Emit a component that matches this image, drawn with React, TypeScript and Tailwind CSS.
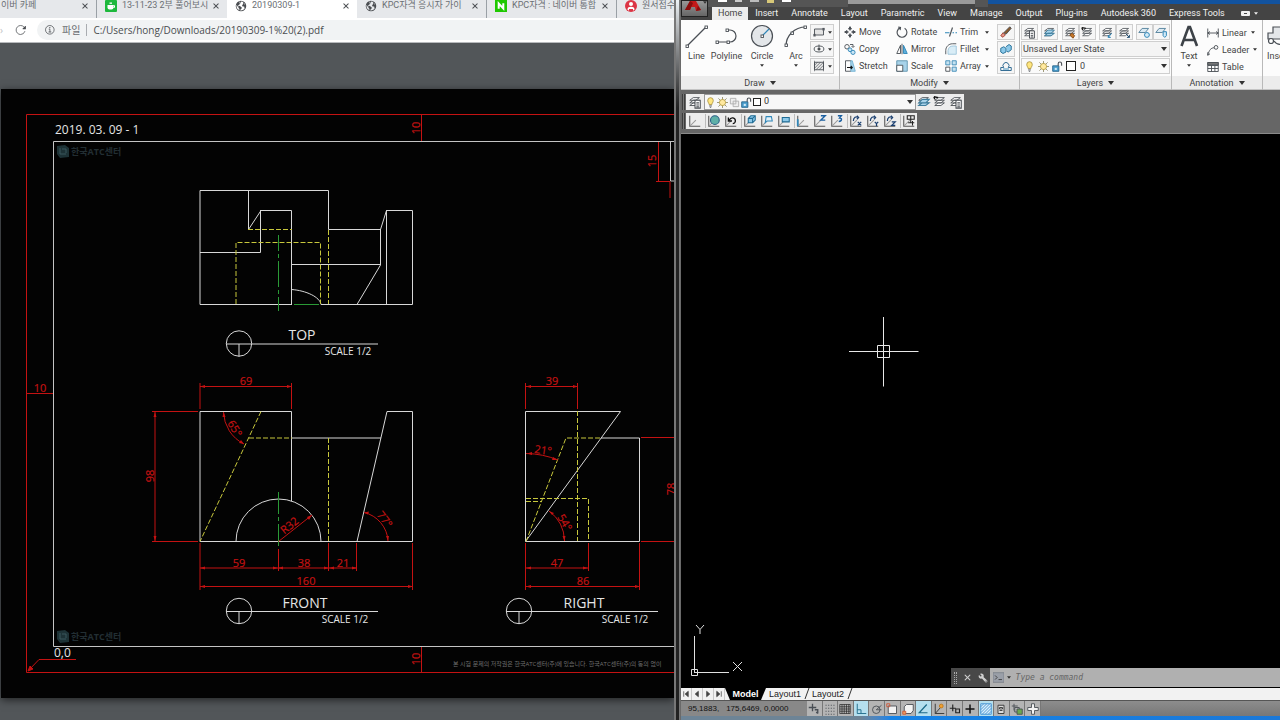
import React from 'react';
import clsx from 'clsx';
import { IoClose, IoReload, IoEarth, IoInformationCircleOutline, IoBuild } from 'react-icons/io5';

const MENU_TABS = [
  'Home',
  'Insert',
  'Annotate',
  'Layout',
  'Parametric',
  'View',
  'Manage',
  'Output',
  'Plug-ins',
  'Autodesk 360',
  'Express Tools'
];

interface GlyphProps {
  children: React.ReactNode;
  className?: string;
  box?: string;
}

const Glyph: React.FC<GlyphProps> = ({ children, className = 'w-3.5 h-3.5', box = '0 0 16 16' }) => (
  <svg
    viewBox={box}
    className={clsx('flex-none', className)}
    fill="none"
    stroke="#4a4f55"
    strokeWidth="1.2"
    aria-hidden="true"
  >
    {children}
  </svg>
);

const Caret: React.FC<{ big?: boolean }> = ({ big }) => (
  <svg viewBox="0 0 6 4" className={clsx('flex-none', big ? 'w-[6px] h-[4px]' : 'w-[4px] h-[3px]')} aria-hidden="true">
    <path d="M0 0h6L3 4z" fill="#333" />
  </svg>
);

/* ---------- browser ---------- */

interface BrowserTabProps {
  title: string;
  icon?: React.ReactNode;
  active?: boolean;
  first?: boolean;
  divider?: boolean;
}

const BrowserTab: React.FC<BrowserTabProps> = ({ title, icon, active, first, divider }) => (
  <div
    className={clsx(
      'flex h-[18px] flex-none items-center pb-[7px] pr-[6px]',
      first ? 'w-[97px] pl-px' : 'w-[130px] pl-2',
      active ? 'bg-white' : 'bg-[#e6e8eb]',
      divider && 'border-r border-[#9aa0a6]'
    )}
  >
    <button className="flex min-w-0 flex-1 items-center gap-[5px] text-[9px] leading-[11px] text-[#6b6f74]">
      {icon}
      <span className="flex-1 whitespace-nowrap text-left">{title}</span>
    </button>
    <button aria-label="Close tab" className="flex-none">
      <IoClose className="h-[10px] w-[10px] text-[#4a4d51]" />
    </button>
  </div>
);

const CafeIcon = () => (
  <svg viewBox="0 0 12 12" className="h-3 w-3 flex-none" aria-hidden="true">
    <rect width="12" height="12" rx="1" fill="#1db83c" />
    <path d="M2.5 5h6v2.6a2 2 0 0 1-2 2h-2a2 2 0 0 1-2-2z" fill="#fff" />
    <path d="M8.3 5.6h1.2v1.8H8.3" fill="none" stroke="#fff" />
    <path d="M4.5 2.5h2.5v1.3H4.5z" fill="#fff" />
  </svg>
);

const NaverIcon = () => (
  <svg viewBox="0 0 12 12" className="h-3 w-3 flex-none" aria-hidden="true">
    <rect width="12" height="12" fill="#1ec800" />
    <path d="M3.7 8.8V3.6l4.6 4.8V3.2" fill="none" stroke="#fff" strokeWidth="2" />
  </svg>
);

const PersonIcon = () => (
  <svg viewBox="0 0 12 12" className="h-3 w-3 flex-none" aria-hidden="true">
    <circle cx="6" cy="6" r="6" fill="#dc3545" />
    <circle cx="6" cy="4" r="2" fill="#fff" />
    <path d="M2.4 9.6C2.6 7.5 4 6.8 6 6.8s3.4.7 3.6 2.8L8 10.8V9H4v1.8z" fill="#fff" />
  </svg>
);

const globe = <IoEarth className="h-3 w-3 flex-none text-[#4a4d51]" />;

/* ---------- drawing sheet ---------- */

const RED = '#c41212';
const YELLOW = '#c8c83c';

interface LabelProps {
  x: number;
  y: number;
  children: React.ReactNode;
  rotate?: number;
}

// dimension text, centred on x/y
const DimText: React.FC<LabelProps> = ({ x, y, rotate = 0, children }) => (
  <text
    y="3"
    textAnchor="middle"
    transform={`translate(${x} ${y}) rotate(${rotate})`}
    fill={RED}
    stroke={RED}
    strokeWidth="0.2"
    fontSize="11"
  >
    {children}
  </text>
);

const Dim: React.FC<{ x1: number; x2: number; y: number }> = ({ x1, x2, y }) => (
  <g stroke={RED} fill={RED}>
    <path d={`M${x1} ${y}H${x2}`} />
    <path stroke="none" d={`M${x1} ${y}l5-1.5v3zM${x2} ${y}l-5-1.5v3z`} />
  </g>
);

const ViewTitle: React.FC<{ x: number; y: number; name: string; nameX: number; scaleX: number }> = ({
  x,
  y,
  name,
  nameX,
  scaleX
}) => (
  <g>
    <g fill="none" stroke="#d8d8d8">
      <circle cx={x} cy={y - 0.5} r="12.7" />
      <path d={`M${x - 13} ${y}H${x + 139}M${x} ${y}v12.5`} />
    </g>
    <g fill="#e6e6e6" textAnchor="middle">
      <text x={nameX} y={y - 4} fontSize="14">
        {name}
      </text>
      <text x={scaleX} y={y + 11} fontSize="10">
        SCALE 1/2
      </text>
    </g>
  </g>
);

const Watermark: React.FC<{ y: number }> = ({ y }) => (
  <g>
    <path d={`M57 ${y}l8-1 4 3v9l-9 1-3-4z`} fill="#1d3236" />
    <path d={`M60 ${y + 2}v6h6M62 ${y + 3}h4v4`} fill="none" stroke="#3a565c" />
    <text x="71" y={y + 9} fontSize="9" fontWeight="700" fill="#222e33">
      한국ATC센터
    </text>
  </g>
);

const DrawingSheet = () => (
  <svg
    viewBox="1 89 673 609"
    className="block w-full bg-[#030303] font-['Open_Sans','Noto_Sans_CJK_KR',sans-serif]"
    role="img"
    aria-label="2019. 03. 09 - 1"
  >
    {/* frame */}
    <g fill="none" stroke={RED}>
      <path d="M674 114.5H26.5V672.5H674M421.5 114v27M421.5 646v26M26 393.5h27M28 671l11-11.5h37" />
      <path d="M658.5 141v40M656 181.5h14V198M658 141.5h13" />
      <path d="M28 671l2-5 3 3z" fill={RED} />
    </g>
    <path d="M674 141.5H53.5V646.5H674M670.5 141v40h4" fill="none" stroke="#c4c4c4" />
    <DimText x={417} y={128} rotate={-90}>10</DimText>
    <DimText x={417} y={659} rotate={-90}>10</DimText>
    <DimText x={40} y={389}>10</DimText>
    <DimText x={653} y={161} rotate={-90}>15</DimText>
    <text x="55" y="134" fontSize="12" fill="#e6e6e6">2019. 03. 09 - 1</text>
    <text x="54" y="657" fontSize="12" fill="#e6e6e6">0,0</text>
    <Watermark y={146} />
    <Watermark y={631} />
    <text x="453" y="666" fontSize="6" fill="#707070">
      본 시험 문제의 저작권은 한국ATC센터(주)에 있습니다. 한국ATC센터(주)의 동의 없이
    </text>

    {/* top view */}
    <g fill="none" stroke="#d8d8d8">
      <path d="M292 304.5H200V190.5H328.5V229.5H380.5L386.5 210.5H412.5V304.5H321" />
      <path d="M248.5 190v39.5L261 210.5H291.5V304.5M260.5 210V252.5H200M386.5 210v94" />
      <path d="M380.5 229V265L357 304.5M291 264.5h90M291.5 289.5C306 290.5 320 297 321 304.5" />
    </g>
    <g fill="none" stroke={YELLOW} strokeDasharray="5 2">
      <path d="M248 229.5h44M236 304V242.5H320.5V304M328.5 230v74" />
    </g>
    <g stroke="#2a9a36">
      <path d="M278.500 235v76" strokeDasharray="16 3 4 3 26 3 4 3" />
      <path d="M294 304.5h25" />
    </g>
    <ViewTitle x={239} y={344} name="TOP" nameX={302} scaleX={348} />

    {/* front view */}
    <g fill="none" stroke="#d8d8d8">
      <path d="M291.5 501V411.5H200V541.5H412.5V411.5H387L357 541.5M291 438h90" />
      <path d="M236 541.5a42.5 42.5 0 0 1 85 0" />
    </g>
    <g fill="none" stroke={YELLOW} strokeDasharray="5 2">
      <path d="M261 411.5L200 541.5M249 438h43M328.5 438v103" />
    </g>
    <path d="M278.500 492v57" stroke="#2a9a36" strokeDasharray="22 3 4 3" />
    <g fill="none" stroke={RED}>
      <path d="M200 409V383M291.5 409V383M198 411.5H152M198 541.5H152M155 411v130" />
      <path d="M200 543v47M278.5 549v22M328.5 543v28M356.5 543v28M412.5 543v47" />
      <path d="M223.5 412A37 37 0 0 0 244 444M278.5 541.5L312 515M364 512.5A31 31 0 0 1 388 541" />
    </g>
    <path
      d="M155 412l-1.5 5h3zM155 541l-1.5-5h3zM223.5 412l-1 5h3zM244 444l-3-4-2 3zM312 515l-5 2 2 3zM364 512.5l5-1-1 3zM388 541l-2-5h3z"
      fill={RED}
    />
    <Dim x1={200} x2={292} y={386.5} />
    <Dim x1={200} x2={278} y={568} />
    <Dim x1={278} x2={329} y={568} />
    <Dim x1={329} x2={357} y={568} />
    <Dim x1={200} x2={413} y={586.5} />
    <DimText x={246} y={382}>69</DimText>
    <DimText x={151} y={476} rotate={-90}>98</DimText>
    <DimText x={234} y={429} rotate={58}>65°</DimText>
    <DimText x={290} y={526} rotate={-39}>R32</DimText>
    <DimText x={384} y={520} rotate={52}>77°</DimText>
    <DimText x={239} y={564}>59</DimText>
    <DimText x={304} y={564}>38</DimText>
    <DimText x={343} y={564}>21</DimText>
    <DimText x={306} y={582}>160</DimText>
    <ViewTitle x={239} y={611.5} name="FRONT" nameX={305} scaleX={345} />

    {/* right view */}
    <g fill="none" stroke="#d8d8d8">
      <path d="M525.5 411.5H620.5L525.5 541.5zM525.5 541.5H639.5V438H601" />
    </g>
    <g fill="none" stroke={YELLOW} strokeDasharray="5 2">
      <path d="M577.5 411v130M526 541.5L566 438H601M526 498.5H588.5V541M526 501.5h16" />
    </g>
    <g fill="none" stroke={RED}>
      <path d="M525.5 409V383M577.5 409V383M525.5 543v47M588.5 543v28M639.5 543v47" />
      <path d="M641 437.5h33M641 541.5h33M526 453.5A88 88 0 0 1 558 460M549 511A38 38 0 0 1 564.5 541" />
    </g>
    <path d="M527 453.5l5-1.5v3zM558 460l-5-3-1 3zM549 511l5 2-2 2zM564.5 541l-2-5h3z" fill={RED} />
    <Dim x1={526} x2={578} y={386.5} />
    <Dim x1={526} x2={588} y={568} />
    <Dim x1={526} x2={640} y={586.5} />
    <DimText x={552} y={382}>39</DimText>
    <DimText x={543} y={451} rotate={8}>21°</DimText>
    <DimText x={564} y={523} rotate={58}>54°</DimText>
    <DimText x={557} y={564}>47</DimText>
    <DimText x={583} y={582}>86</DimText>
    <DimText x={672} y={489} rotate={-90}>78</DimText>
    <ViewTitle x={519} y={611.5} name="RIGHT" nameX={584} scaleX={625} />
  </svg>
);

const BrowserWindow = () => (
  <section className="flex min-w-0 flex-1 flex-col overflow-hidden bg-[#525659]">
    <div className="flex overflow-hidden bg-[#e6e8eb] font-['Roboto','Noto_Sans_CJK_KR',sans-serif]">
      <BrowserTab first divider title="이버 카페" />
      <BrowserTab title="13-11-23 2부 풀어보시" icon={<CafeIcon />} />
      <BrowserTab active title="20190309-1" icon={globe} />
      <BrowserTab divider title="KPC자격 응시자 가이" icon={globe} />
      <BrowserTab divider title="KPC자격 : 네이버 통합" icon={<NaverIcon />} />
      <div className="flex h-[18px] flex-1 items-center gap-[5px] pb-[7px] pl-2">
        <PersonIcon />
        <button className="whitespace-nowrap text-[9px] leading-[11px] text-[#6b6f74]">원서접수</button>
      </div>
    </div>
    <div className="flex h-[25px] items-center border-b border-[#b8babd] bg-white">
      <span className="w-[15px] text-[10px] text-[#c0c2c5]">›</span>
      <button aria-label="Reload" className="mr-[10px]">
        <IoReload className="h-3 w-3 text-[#4a4d51]" />
      </button>
      <label className="flex h-5 min-w-0 flex-1 items-center gap-[6px] rounded-l-full bg-[#f1f3f4] pl-[7px] text-[#6a6d71]">
        <IoInformationCircleOutline className="h-3 w-3 flex-none text-[#4a4d51]" />
        <span className="flex-none border-r border-[#a9acb0] pr-[6px] text-[10px] leading-3">파일</span>
        <input
          className="min-w-0 flex-1 bg-transparent text-[10px] text-[#4a4d51] outline-none"
          defaultValue="C:/Users/hong/Downloads/20190309-1%20(2).pdf"
        />
      </label>
    </div>
    <div className="flex-1 pl-px pt-[46px]">
      <div className="shadow-[0_2px_8px_rgba(0,0,0,0.6)]">
        <DrawingSheet />
      </div>
    </div>
  </section>
);

/* ---------- CAD icons ---------- */

const node = (x: number, y: number) => <rect x={x - 1} y={y - 1} width="2.5" height="2.5" fill="#fff" strokeWidth="0.9" />;

const layerStack = (
  <g fill="#fff" strokeWidth="1">
    <path d="M2 12l4-3h7l-4 3zM2 9l4-3h7l-4 3zM2 6l4-3h7l-4 3z" />
  </g>
);

const LayerIcon: React.FC<{ kind: number; className?: string }> = ({ kind, className }) => (
  <Glyph className={className}>
    {kind === 6 || kind === 7 ? <path d="M1 8l4-5h8l-4 5z" fill="#dbeaf3" stroke="#5c87a0" /> : layerStack}
    {kind === 0 && <path d="M8 6h6v9H8zM9.5 9h3M9.5 11.5h3M9.5 13.5h3" fill="#fff" />}
    {kind === 1 && <path d="M2 9l4-4h8l-4 4zM2 12l4-3h8l-4 3z" fill="#a9d3ea" stroke="#3f7f9f" />}
    {kind === 2 && <path d="M7 11l3-2 3 3-2 3z" fill="#c77a2c" stroke="#8a4a12" />}
    {kind === 3 && <path d="M1 2l5 1M1 2l1 3" stroke="#111" strokeWidth="1.5" />}
    {kind === 4 && <path d="M13 9l-4 5M9 11v3h3" stroke="#1f7bb0" />}
    {kind === 5 && <path d="M10 10l4 4M14 11v3h-3" stroke="#1f4b70" />}
    {kind === 6 && <circle cx="11" cy="11" r="3" fill="#d4ebf7" stroke="#2e86b8" />}
    {kind === 7 && <path d="M10 7h4v5l-2 2-2-2z" fill="#d4ebf7" stroke="#2e86b8" />}
  </Glyph>
);

const Bulb = () => (
  <Glyph className="h-[11px] w-[11px]">
    <path d="M6 11c0-2-2-3-2-6a4 4 0 0 1 8 0c0 3-2 4-2 6z" fill="#ffe680" stroke="#a78f3a" />
    <path d="M6 13h4M7 15h2" />
  </Glyph>
);

const Sun = () => (
  <Glyph className="h-[11px] w-[11px]">
    <path d="M8 0v16M0 8h16M2 2l12 12M14 2L2 14" stroke="#8a8562" />
    <circle cx="8" cy="8" r="4.5" fill="#ffe9a0" stroke="#b49a3c" />
  </Glyph>
);

const Padlock = () => (
  <Glyph className="h-[11px] w-[11px]">
    <path d="M1 7h9v8H1z" fill="#4d9fce" stroke="#1c5c85" />
    <path d="M9 7V4a2.5 2.5 0 0 1 5 0v3" strokeWidth="1.6" />
    <path d="M4 10h3v3H4z" fill="#d4ebf7" stroke="none" />
  </Glyph>
);

const MODIFY = [
  {
    label: 'Move',
    icon: (
      <>
        <path d="M8 1v5M8 10v5M1 8h5M10 8h5" strokeWidth="1.8" />
        <path d="M6 4l2-3 2 3zM6 12l2 3 2-3zM4 6L1 8l3 2zM12 6l3 2-3 2z" fill="#4a4f55" />
      </>
    )
  },
  {
    label: 'Copy',
    icon: (
      <>
        <circle cx="4" cy="5" r="3" />
        <circle cx="8" cy="9" r="2.5" fill="#cbe6f5" stroke="#2e86b8" />
        <circle cx="12" cy="12.5" r="2.8" fill="#cbe6f5" stroke="#2e86b8" />
        <path d="M8 2h4v3M10 4l2 2 2-2" />
      </>
    )
  },
  {
    label: 'Stretch',
    icon: (
      <>
        <path d="M9 1h2l4 14H9z" fill="#a8d3ea" stroke="#6fb0d2" />
        <path d="M9 1H2v14h7" />
        <path d="M4 10h7M9 8l2 2-2 2" stroke="#111" strokeWidth="1.5" />
      </>
    )
  },
  {
    label: 'Rotate',
    icon: <path d="M5.5 2.5a6.5 6.5 0 1 0 6 .5M3 1.5l3 .5-.5 3.5" strokeWidth="1.5" />
  },
  {
    label: 'Mirror',
    icon: (
      <>
        <path d="M6 3v11H1z" />
        <path d="M10 3v11h5z" fill="#5db0dc" stroke="#2e86b8" />
        <path d="M8 1v14" />
      </>
    )
  },
  {
    label: 'Scale',
    icon: (
      <>
        <path d="M1 1h14v14H1z" fill="#a8d3ea" stroke="#5f93ae" />
        <path d="M1 7h8v8H1z" fill="#fff" />
      </>
    )
  },
  {
    label: 'Trim',
    caret: true,
    icon: (
      <>
        <path d="M0 9h6M10 9h2M14 9h2" stroke="#2e86b8" strokeWidth="1.6" />
        <path d="M10 2L6 14" strokeWidth="1.5" />
      </>
    )
  },
  {
    label: 'Fillet',
    caret: true,
    icon: (
      <>
        <path d="M4 15V10a7 7 0 0 1 7-6h4v11z" fill="#d9edf7" stroke="#9cc4d9" />
        <path d="M1 15V10C1 5 5 1 10 1h5" />
      </>
    )
  },
  {
    label: 'Array',
    caret: true,
    icon: (
      <>
        <path d="M1 1h5.5v5.5H1zM9.5 1H15v5.5H9.5zM9.5 9.5H15V15H9.5z" fill="#c5e2f1" stroke="#3d8ab5" />
        <path d="M1 9.5h5.5V15H1z" fill="#fff" />
      </>
    )
  }
];

/* ---------- ribbon ---------- */

const smallButton = 'flex h-4 items-center justify-center border border-[#cfcfcf] bg-[#f6f6f6]';

const Panel: React.FC<{ title: string; className?: string; children: React.ReactNode }> = ({
  title,
  className,
  children
}) => (
  <section className={clsx('flex flex-none flex-col border-r border-[#b9b9b9]', className)}>
    <div className="flex h-14 bg-[#fcfcfc] pt-1">{children}</div>
    <button className="flex h-[14px] w-full items-center justify-center gap-[5px] border-b border-[#c4c4c4] bg-[#ececec]">
      {title}
      <Caret big />
    </button>
  </section>
);

const BigTool: React.FC<{ label: string; caret?: boolean; className: string; children: React.ReactNode }> = ({
  label,
  caret,
  className,
  children
}) => (
  <button className={clsx('flex flex-none flex-col items-center', className)}>
    <Glyph className="h-6 w-6" box="0 0 24 24">
      {children}
    </Glyph>
    <span className="leading-4">{label}</span>
    {caret && <Caret />}
  </button>
);

const DRAW_SMALL = [
  <>
    <path d="M2 4h12v8H2z" fill="#e4e4e4" />
    {node(2, 12)}
    {node(14, 4)}
  </>,
  <>
    <ellipse cx="8" cy="8" rx="6.5" ry="4" />
    <circle cx="8" cy="8" r="1.5" fill="#333" />
    <path d="M8 2v4" />
  </>,
  <>
    <path d="M2 3h12v10H2z" fill="#e8e8e8" />
    <path d="M2 7l4-4M2 11l8-8M4 13L14 3M8 13l6-6M2 1v14M14 1v14" strokeWidth="0.9" />
  </>
];

const ANNOTATE = [
  { label: 'Linear', icon: <path d="M1 2v12M15 2v12M1 8h14M4 6L1 8l3 2M12 6l3 2-3 2" />, caret: true },
  {
    label: 'Leader',
    icon: (
      <>
        <path d="M1 15C3 8 5 5 10 5M1 15v-4M1 15l3-2" />
        <circle cx="12" cy="4.5" r="2.5" />
      </>
    ),
    caret: true
  },
  {
    label: 'Table',
    icon: (
      <>
        <path d="M1 2h14v12H1zM1 6h14M1 10h14M6 6v8M10.5 6v8" />
        <path d="M1 2h14v3H1z" fill="#777" />
      </>
    )
  }
];

const Ribbon = () => (
  <div className="flex flex-none overflow-hidden bg-[#fcfcfc] text-[9px] leading-3 text-[#444]">
    <Panel title="Draw" className="w-[159px]">
      <BigTool label="Line" className="w-[31px]">
        <path d="M2 22L21 3" />
        {node(2, 22)}
        {node(21, 3)}
      </BigTool>
      <BigTool label="Polyline" className="w-[29px]">
        <path d="M2 18h13a6 6 0 0 0 0-12h-3" />
        {node(2, 18)}
        {node(13, 18)}
        {node(12, 6)}
      </BigTool>
      <BigTool label="Circle" caret className="w-[42px]">
        <circle cx="12" cy="12" r="10.5" fill="#e3e6e9" />
        <path d="M12 12l7-7" stroke="#2e86b8" />
        {node(12, 12)}
      </BigTool>
      <BigTool label="Arc" caret className="w-[26px]">
        <path d="M2 22C2 12 10 3 22 3" />
        {node(2, 21)}
        {node(8, 9)}
        {node(21, 3)}
      </BigTool>
      <div className="ml-px flex flex-col gap-px">
        {DRAW_SMALL.map((icon, i) => (
          <button key={i} className={clsx(smallButton, 'w-6 gap-[3px]')} aria-label="Draw tool">
            <Glyph className="h-3 w-3">{icon}</Glyph>
            <Caret />
          </button>
        ))}
      </div>
    </Panel>

    <Panel title="Modify" className="w-[180px]">
      <div className="grid flex-1 grid-flow-col grid-cols-[52px_49px_48px] grid-rows-[17px_17px_17px] pl-1">
        {MODIFY.map((tool) => (
          <button key={tool.label} className="flex h-4 items-center gap-[3px]">
            <Glyph className="h-3 w-3">{tool.icon}</Glyph>
            <span className="min-w-0 flex-1 text-left">{tool.label}</span>
            {tool.caret && (
              <span className="mr-1">
                <Caret />
              </span>
            )}
          </button>
        ))}
      </div>
      <div className="mr-1 flex flex-col gap-px">
        <button className={clsx(smallButton, 'w-[18px]')} aria-label="Erase">
          <Glyph className="h-3 w-3">
            <path d="M1 13l3-4 3 3-3 3z" fill="#e79a8c" stroke="#a04030" />
            <path d="M5 9l8-8 2 2-7 8z" fill="#8a5a2c" />
          </Glyph>
        </button>
        <button className={clsx(smallButton, 'w-[18px]')} aria-label="Explode">
          <Glyph className="h-3 w-3">
            <path d="M1 7l4-2 3 2v5l-4 2-3-2zM8 5l4-3 3 2v5l-4 3-2-1" fill="#8cc9ea" stroke="#1f6b94" />
          </Glyph>
        </button>
        <button className={clsx(smallButton, 'w-[18px]')} aria-label="Offset">
          <Glyph className="h-3 w-3">
            <path d="M1 14h14v-4h-4a4 4 0 1 0-6 0H1z" stroke="#1f5f8a" />
            <path d="M4 12h8" stroke="#2e86b8" />
          </Glyph>
        </button>
      </div>
    </Panel>

    <Panel title="Layers" className="w-[152px]">
      <div className="flex min-w-0 flex-1 flex-col gap-px px-px">
        <div className="flex justify-between">
          {[[0], [1], [2, 3], [4, 5], [6, 7]].map((group) => (
            <div key={group[0]} className="flex">
              {group.map((kind) => (
                <button key={kind} className={clsx(smallButton, 'w-[17px]')} aria-label="Layer tool">
                  <LayerIcon kind={kind} className="h-[13px] w-[13px]" />
                </button>
              ))}
            </div>
          ))}
        </div>
        <div className="flex h-4 items-center border border-[#cfcfcf] bg-[#f4f4f4] pr-[2px]">
          <select aria-label="Layer state" className="min-w-0 flex-1 appearance-none bg-transparent pl-px outline-none">
            <option>Unsaved Layer State</option>
          </select>
          <Caret big />
        </div>
        <div className="flex h-4 items-center gap-[3px] border border-[#cfcfcf] bg-[#fafafa] px-[2px]">
          <Bulb />
          <Sun />
          <Padlock />
          <span className="h-[10px] w-[10px] border border-[#222] bg-white" />
          <select aria-label="Layer" className="min-w-0 flex-1 appearance-none bg-transparent pl-px outline-none">
            <option>0</option>
          </select>
          <Caret big />
        </div>
      </div>
    </Panel>

    <Panel title="Annotation" className="w-[91px]">
      <BigTool label="Text" caret className="w-[34px]">
        <path d="M4.5 22L11.5 3h1.500L20 22M7 16h10.500" strokeWidth="2.6" stroke="#3d4248" />
      </BigTool>
      <div className="flex flex-1 flex-col pl-px">
        {ANNOTATE.map((item) => (
          <button key={item.label} className="flex h-[17px] items-center gap-[3px]">
            <Glyph className="h-3 w-3">{item.icon}</Glyph>
            {item.label}
            {item.caret && (
              <span className="ml-px">
                <Caret />
              </span>
            )}
          </button>
        ))}
      </div>
    </Panel>

    <section className="flex min-w-0 flex-1 flex-col overflow-hidden">
      <button className="flex h-14 flex-col items-start pl-1 pt-1">
        <Glyph className="h-6 w-6" box="0 0 24 24">
          <path d="M1 9h5V3h14v12H1z" fill="#e3e6e9" />
          <circle cx="4" cy="17" r="2.5" fill="#fff" />
          <path d="M7 17c3 4 7 4 10 2" />
        </Glyph>
        <span className="leading-4">Insert</span>
      </button>
      <div className="h-[14px] border-b border-[#c4c4c4] bg-[#ececec]" />
    </section>
  </div>
);

/* ---------- toolbars ---------- */

const Grip = () => <span className="h-4 w-[3px] flex-none border-x border-[#3c3c3c] bg-[#777]" />;

const ucsMarks: React.ReactNode[] = [
  null,
  <circle cx="9" cy="7" r="5" fill="#5fb0a8" stroke="#2a5f86" />,
  <path d="M6 7c2-4 7-3 7 1 0 2-2 3-3 3M5 4v4h4" stroke="#111" strokeWidth="1.5" />,
  <path d="M6 5l3-3h5v5l-3 3H6zM6 5h5v5M11 5l3-3" fill="#8cc9ea" stroke="#1f6b94" />,
  <path d="M7 3h6l1 5H8l-2 2z" fill="#e3f1f9" stroke="#2e86b8" />,
  <path d="M6 4h8v5H6z" fill="#8cc9ea" stroke="#1f6b94" />,
  <path d="M2 14V6" stroke="#2e86b8" strokeWidth="2" />,
  <path d="M9 2h5l-5 5h5" stroke="#1a5fa0" strokeWidth="1.6" />,
  <path d="M9 2h4l-2 2.5c3 0 3 4-1 4" stroke="#1a5fa0" strokeWidth="1.6" />,
  <path d="M5 8c0-4 3-6 6-4M9 2l2 2-2 2M10 9l4 4M14 9l-4 4" stroke="#1a3f70" strokeWidth="1.4" />,
  <path d="M5 8c0-4 3-6 6-4M9 2l2 2-2 2M10 9l2 2 2-2M12 11v3" stroke="#1a3f70" strokeWidth="1.4" />,
  <path d="M5 8c0-4 3-6 6-4M9 2l2 2-2 2M10 9h4l-4 4h4" stroke="#1a3f70" strokeWidth="1.4" />,
  <path d="M6 2h8v4H6zM10 2v8M7 10h7M12 8v5" stroke="#222" />
];

const Toolbars = () => (
  <div className="flex flex-none flex-col gap-[3px] border-b border-[#8a8a8a] bg-[#666] pb-1 pl-px pt-1 text-[9px] text-[#333]">
    <div className="flex items-center gap-px">
      <Grip />
      <div className="flex h-4 items-center bg-[#ededed]">
        <button aria-label="Layer properties" className="w-[18px] px-[2px]">
          <LayerIcon kind={0} />
        </button>
        <div className="flex h-4 w-[212px] items-center gap-px border border-[#9a9a9a] bg-[#f7f7f7] pr-[2px]">
          <Bulb />
          <Sun />
          <Glyph className="h-[11px] w-[11px]">
            <path d="M2 2h8v8H2zM6 6h8v8H6z" stroke="#aaa" fill="#eee" />
          </Glyph>
          <Padlock />
          <span className="h-2 w-2 border border-[#222] bg-white" />
          <select aria-label="Current layer" className="ml-[2px] min-w-0 flex-1 appearance-none bg-transparent outline-none">
            <option>0</option>
          </select>
          <Caret big />
        </div>
        {[1, 3, 0].map((kind) => (
          <button key={kind} aria-label="Layer tool" className="w-4 px-px">
            <LayerIcon kind={kind} />
          </button>
        ))}
      </div>
    </div>
    <div className="flex items-center gap-px">
      <Grip />
      <div className="flex h-4 items-center bg-[#ededed]">
        {ucsMarks.map((mark, i) => (
          <button
            key={i}
            aria-label="UCS tool"
            className={clsx(
              'flex h-[14px] w-[17px] justify-center',
              [1, 3, 6, 9, 12].includes(i) && 'ml-[2px] border-l border-[#bdbdbd]'
            )}
          >
            <Glyph className="h-[14px] w-[14px]">
              <path d="M2 2v12h12" stroke="#555" />
              <path d="M2 14l7-7" stroke="#999" />
              {mark}
            </Glyph>
          </button>
        ))}
      </div>
    </div>
  </div>
);

/* ---------- status bar ---------- */

const STATUS: { icon: React.ReactNode; on?: boolean }[] = [
  { icon: <path d="M6 1v10M1 6h10M9 9h4v5M11 12l2 2" strokeWidth="1.8" /> },
  { icon: <path d="M2 3h12M2 7h12M2 11h12M2 15h12" strokeDasharray="1.5 2" /> },
  {
    icon: <path d="M1 2h14v12H1zM1 5h14M1 8h14M1 11h14M4 2v12M7 2v12M10 2v12M13 2v12" strokeWidth="0.9" stroke="#222" />
  },
  { icon: <path d="M3 1v13h12M3 9h5v5" stroke="#1c6a88" />, on: true },
  { icon: <><circle cx="7" cy="9" r="5" /><path d="M7 9l7-6M7 9h7" /></> },
  { icon: <><path d="M3 4h11v10H3z" fill="#f3f3f3" /><path d="M1 1h4v4H1z" stroke="#d05a3a" /></> },
  {
    icon: (
      <>
        <path d="M3 5l3-3h9v8l-3 4H3z" fill="#f3f3f3" />
        <path d="M1 11h4v4H1z" fill="#e8a060" stroke="#d05a3a" />
      </>
    )
  },
  { icon: <path d="M13 2L3 13h11" stroke="#1c6a88" strokeWidth="1.6" />, on: true },
  {
    icon: (
      <>
        <path d="M3 1v13h12M3 14l7-8" stroke="#333" />
        <circle cx="11" cy="4" r="2.5" fill="#f0a030" stroke="#c07818" />
      </>
    )
  },
  { icon: <path d="M5 2v9M1 7h8M9 8h5v5H9z" stroke="#222" strokeWidth="1.5" /> },
  { icon: <path d="M8 2v12M2 8h12" stroke="#111" strokeWidth="2" /> },
  {
    icon: (
      <path
        d="M1 1h14v14H1zM1 5l4-4M1 9l8-8M1 13L13 1M3 15L15 3M7 15l8-8M11 15l4-4"
        fill="#d9eefb"
        stroke="#3f8fd0"
      />
    ),
    on: true
  },
  { icon: <path d="M4 3h8v11H4zM6 6h4v2H6zM6 10h4" fill="#ddd" stroke="#333" /> },
  { icon: <><path d="M4 1v9M1 4h8M5 6h6v6H5z" /><path d="M8 8h7v7H8z" fill="#6aa84f" /></> },
  { icon: <path d="M6 1h4v5h5v4h-5v5H6v-5H1V6h5z" fill="#f3f3f3" /> }
];

const StatusBar = () => (
  <footer className="flex h-4 flex-none items-stretch border-t border-[#555] bg-gradient-to-b from-[#8d8d8d] to-[#777]">
    <output className="flex w-[126px] flex-none items-center gap-[7px] bg-[#888] pl-[7px] font-['Liberation_Sans',sans-serif] text-[8px] text-[#111]">
      <span>95,1883,</span>
      <span>175,6469, 0,0000</span>
    </output>
    <div className="flex w-[234px] flex-none">
      {STATUS.map((item, i) => (
        <button
          key={i}
          aria-label="Drafting setting"
          className={clsx(
            'flex flex-1 items-center justify-center border-r border-[#777]',
            item.on ? 'bg-[#b5dfee]' : 'bg-[#b4b4b4]'
          )}
        >
          <Glyph className="h-3 w-3">{item.icon}</Glyph>
        </button>
      ))}
    </div>
  </footer>
);

const LayoutTabs = () => (
  <nav className="flex h-3 flex-none items-stretch overflow-hidden bg-[#f2f2f2] font-['Liberation_Sans',sans-serif] text-[9px] leading-[11px] text-[#222]">
    {['M3 2v6M8 2L4.5 5 8 8z', 'M7 2L3.5 5 7 8z', 'M4 2l3.5 3L4 8z', 'M8 2v6M3 2l3.5 3L3 8z'].map((d) => (
      <button key={d} aria-label="Scroll tabs" className="w-[11px] flex-none border-r border-[#c8c8c8]">
        <svg viewBox="0 0 11 10" className="h-[10px] w-[10px]" fill="#444" stroke="#444" strokeWidth="0.8">
          <path d={d} />
        </svg>
      </button>
    ))}
    <button className="w-[41px] bg-black text-center font-bold text-white [clip-path:polygon(0_0,100%_0,calc(100%-5px)_100%,5px_100%)]">
      Model
    </button>
    <button className="ml-[3px]">Layout1</button>
    <svg viewBox="0 0 6 12" className="ml-[3px] mr-px h-3 w-[6px]" stroke="#333" aria-hidden="true">
      <path d="M1 11L5 0" />
    </svg>
    <button className="ml-px">Layout2</button>
    <svg viewBox="0 0 6 12" className="ml-[3px] mr-px h-3 w-[6px]" stroke="#333" aria-hidden="true">
      <path d="M1 11L5 0" />
    </svg>
  </nav>
);

const ModelSpace = () => (
  <main className="relative min-h-0 flex-1 bg-black">
    <svg viewBox="0 0 70 70" className="absolute left-[28%] top-[33%] h-[70px] w-[70px]" fill="none" stroke="#e8e8e8">
      <path d="M34.5 0v28.5M34.5 40.5v29M0 34.5h28.5M40.5 34.5h29M28.5 28.5h12v12h-12zM34.5 29v11M29 34.5h11" />
    </svg>
    <svg
      viewBox="0 0 70 60"
      className="absolute bottom-[6px] left-2 h-[60px] w-[70px]"
      fill="none"
      stroke="#e0e0e0"
      aria-label="UCS"
    >
      <path d="M5.5 14v36M5 50.5h35M2.5 47.5h6v6h-6z" />
      <path d="M7 3l4 4.5L15 3M11 7.5V12M44 40l9 9M53 40l-9 9" />
    </svg>
    <div className="absolute bottom-px right-0 flex h-[19px] w-[55%] items-center bg-[#b0b0b0]">
      <div className="flex h-full w-[39px] flex-none items-center gap-[5px] bg-[#484848] pl-[3px] text-[#d0d0d0]">
        <span className="h-3 w-[3px] border-x border-dotted border-[#aaa]" />
        <button aria-label="Close command line">
          <IoClose className="h-[11px] w-[11px]" />
        </button>
        <button aria-label="Customize">
          <IoBuild className="h-[10px] w-[10px] -scale-x-100" />
        </button>
      </div>
      <div className="flex min-w-0 flex-1 items-center gap-[3px] pl-[3px]">
        <Glyph className="h-[11px] w-[11px]">
          <path d="M0 1h16v14H0z" fill="#9a9fa8" stroke="#7a7f88" />
          <path d="M3 5l3 3-3 3M8 11h5" stroke="#333" />
        </Glyph>
        <Caret />
        <input
          aria-label="Command"
          placeholder="Type a command"
          className="ml-[2px] min-w-0 flex-1 bg-transparent font-['DejaVu_Sans_Mono','Liberation_Mono',monospace] text-[8px] italic text-[#333] outline-none placeholder:text-[#666]"
        />
      </div>
    </div>
  </main>
);

const CadWindow = () => (
  <section className="flex min-w-0 flex-col overflow-hidden border-l border-[#6a6a6a] bg-[#666] font-['Roboto',sans-serif]">
    <header className="flex h-5 flex-none bg-[#444]">
      <button
        aria-label="Application menu"
        className="flex h-[17px] w-[27px] flex-none items-start gap-px border border-[#222] bg-gradient-to-b from-[#999] to-[#666] pl-[2px]"
      >
        <svg viewBox="0 0 18 12" className="h-3 w-[18px]" aria-hidden="true">
          <path d="M1 9L6 0h6l5 9-5 1-1-4H7L6 9z" fill="#c41a1a" />
          <path d="M1 9l5-9 3 2-3 7zM12 10l5-1-3-4z" fill="#8a0d0d" />
        </svg>
        <Caret />
      </button>
      <div className="flex min-w-0 flex-1 flex-col">
        <div className="flex h-[7px] flex-none">
          <div className="flex w-[140px] gap-2 bg-[#555] pl-[10px]">
            <span className="h-[2px] w-[9px] bg-white" />
            <span className="h-[2px] w-[7px] bg-[#ccc]" />
            <span className="h-[2px] w-[9px] bg-[#bbb]" />
            <span className="h-[3px] w-[7px] bg-[#d8c878]" />
            <span className="h-[2px] w-[9px] bg-white" />
          </div>
          <div className="h-1 w-[127px] bg-[#9a9a9a]" />
          <div className="w-[13px] bg-[#555]" />
          <div className="flex-1 border-b-3 border-[#444] bg-[#12539f]" />
        </div>
        <nav className="flex h-[13px] items-stretch gap-[13px] pl-1 text-[9px] leading-[13px] text-[#f0f0f0]">
          {MENU_TABS.map((tab, i) => (
            <button
              key={tab}
              className={clsx('flex-none whitespace-nowrap', i === 0 && '-mr-[6px] bg-[#ececec] px-[6px] text-[#444]')}
            >
              {tab}
            </button>
          ))}
          <button aria-label="Ribbon display" className="ml-[3px] flex flex-none items-center gap-1">
            <span className="flex h-[5px] w-[9px] items-center justify-center rounded-[1px] bg-[#eee]">
              <span className="h-px w-[3px] bg-[#444]" />
            </span>
            <svg viewBox="0 0 6 4" className="h-[3px] w-[4px]" aria-hidden="true">
              <path d="M0 0h6L3 4z" fill="#eee" />
            </svg>
          </button>
        </nav>
      </div>
    </header>
    <Ribbon />
    <Toolbars />
    <ModelSpace />
    <LayoutTabs />
    <StatusBar />
    <div className="h-1 flex-none bg-gradient-to-r from-[#6d8496] from-30% via-[#1683e6] via-35% to-[#1a78d8]" />
  </section>
);

const App = () => (
  <div className="grid h-screen grid-cols-[17fr_15fr] overflow-hidden font-['Open_Sans','Noto_Sans_CJK_KR',sans-serif]">
    <div className="flex min-w-0 overflow-hidden">
      <BrowserWindow />
      <div className="w-[6px] flex-none border-l-2 border-r border-[#777] bg-gradient-to-b from-[#eef3f7] via-[#222] via-15% to-[#222]" />
    </div>
    <CadWindow />
  </div>
);

export default App;
